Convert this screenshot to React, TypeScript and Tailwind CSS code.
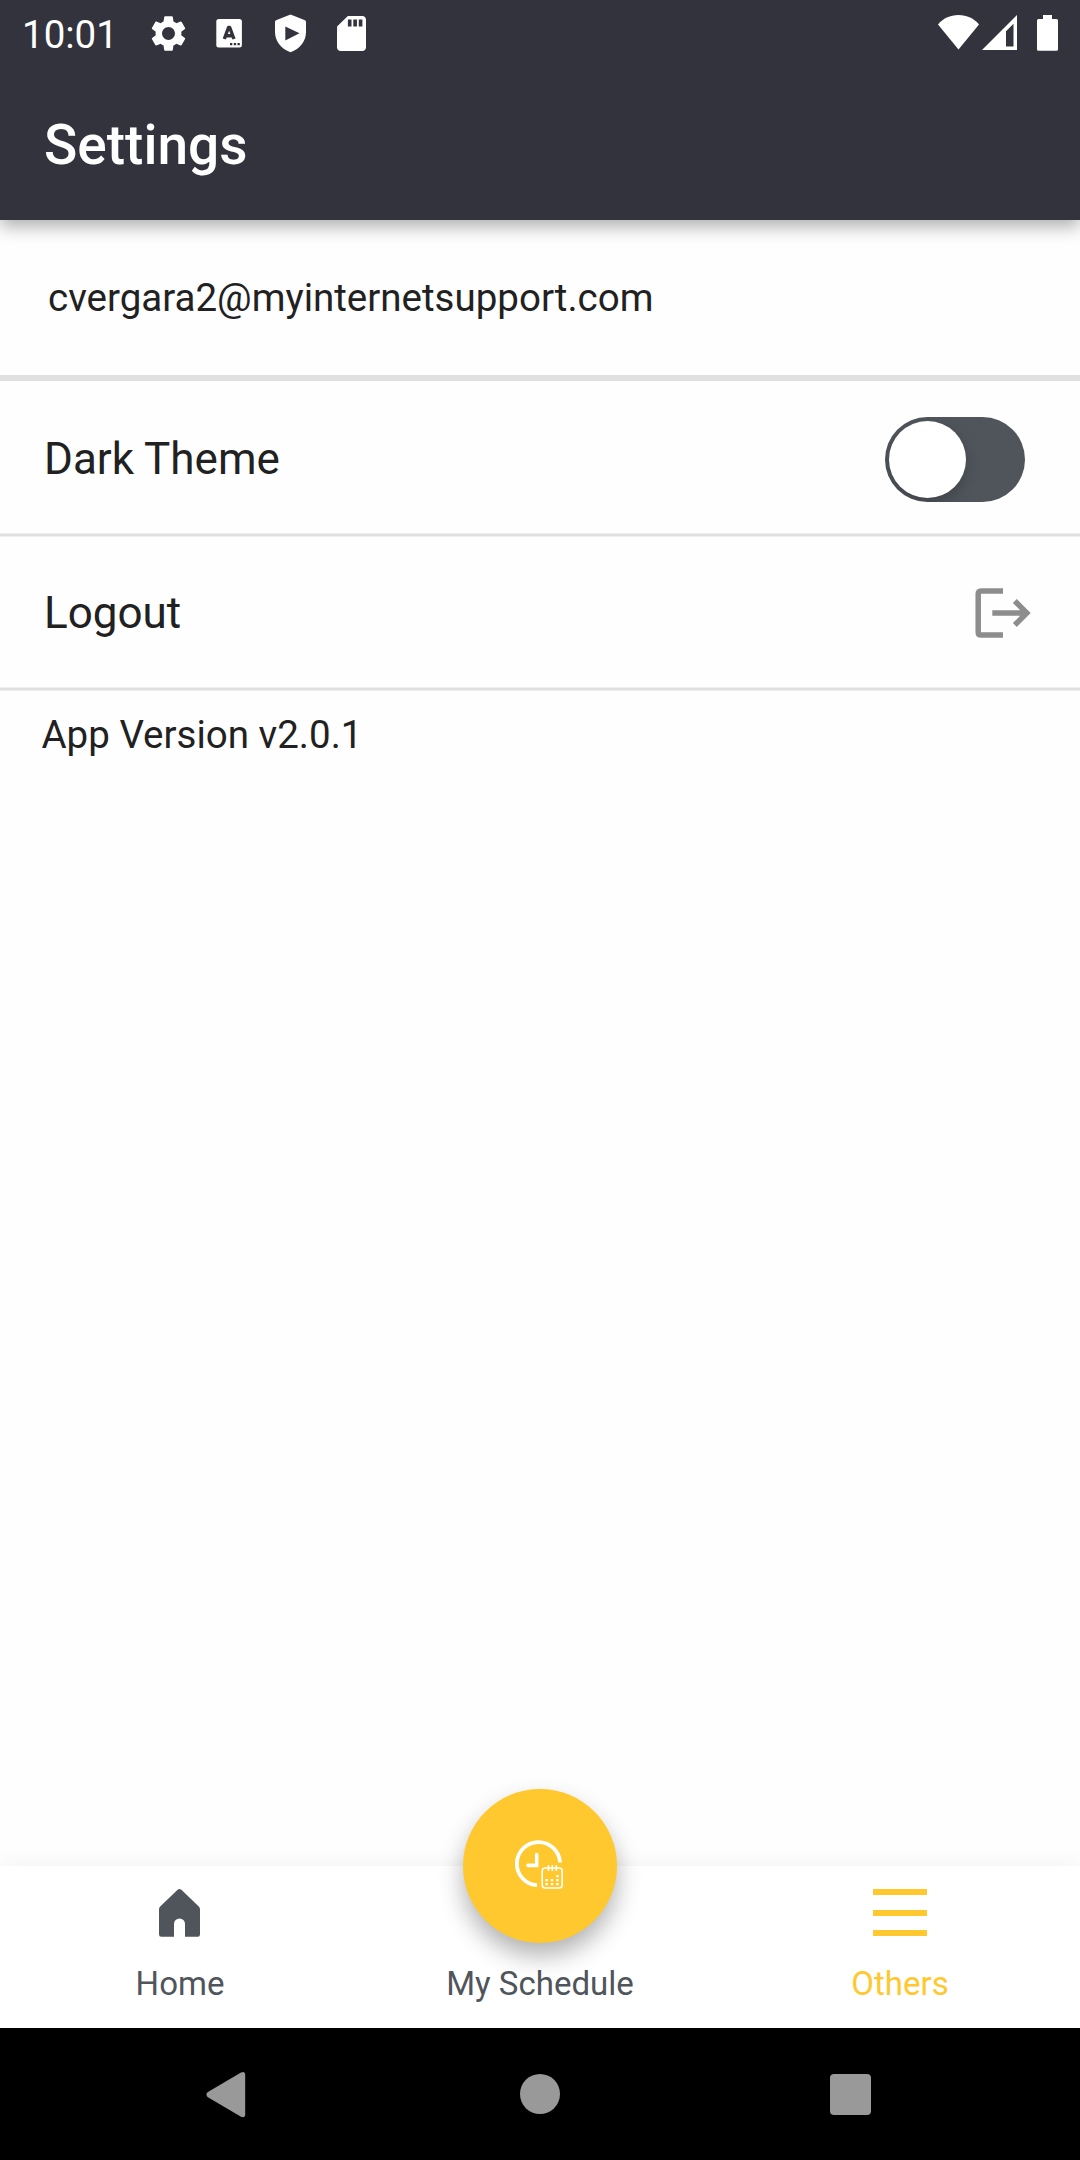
import type { ReactNode } from "react";

function StatusBar() {
  return (
    <div className="flex h-[66px] items-start text-white">
      <span className="ml-[22px] mt-[12px] w-[96px] text-[38.500px] leading-[46px]">10:01</span>
      <svg className="ml-[29px] mt-[12px] h-[43px] w-[43px]" viewBox="0 0 24 24" fill="currentColor">
        <path d="M19.14 12.94c.04-.3.06-.61.06-.94 0-.32-.02-.64-.07-.94l2.03-1.58a.49.49 0 0 0 .12-.61l-1.92-3.32a.488.488 0 0 0-.59-.22l-2.39.96c-.5-.38-1.03-.7-1.62-.94l-.36-2.54a.484.484 0 0 0-.48-.41h-3.84c-.24 0-.43.17-.47.41l-.36 2.54c-.59.24-1.13.57-1.62.94l-2.39-.96c-.22-.08-.47 0-.59.22L2.74 8.87c-.12.21-.08.47.12.61l2.03 1.58c-.05.3-.09.63-.09.94s.02.64.07.94l-2.03 1.58a.49.49 0 0 0-.12.61l1.92 3.32c.12.22.37.29.59.22l2.39-.96c.5.38 1.03.7 1.62.94l.36 2.54c.05.24.24.41.48.41h3.84c.24 0 .44-.17.47-.41l.36-2.54c.59-.24 1.13-.56 1.62-.94l2.39.96c.22.08.47 0 .59-.22l1.92-3.32c.12-.22.07-.47-.12-.61l-2.01-1.58zM12 15.6c-1.98 0-3.6-1.62-3.6-3.6s1.62-3.6 3.6-3.6 3.6 1.62 3.6 3.6-1.62 3.6-3.6 3.6z" />
      </svg>
      <svg className="ml-[26px] mt-[19px] h-[29px] w-[26px]" viewBox="0 0 26 29">
        <rect x="0.3" y="0" width="25.6" height="28.6" rx="2.500" fill="currentColor" />
        <path d="M8.300 20L12.500 8.500H13.700L18 20M9.800 16.800H16.500" fill="none" stroke="#33333d" strokeWidth="3.400" strokeLinejoin="round" />
        <path d="M14 24h2.300v2.200H14zM17.800 24h2.300v2.200h-2.300zM21.500 24h2.300v2.200h-2.300z" fill="#33333d" />
      </svg>
      <svg className="ml-[33px] mt-[14px] h-[39px] w-[32px]" viewBox="0 0 32 39">
        <path d="M15.500.400L30 6.200Q31 6.700 31 7.800V18C31 27 25 35 15.500 38.200C6 35 0 27 0 18V7.800Q0 6.700 1 6.200Z" fill="currentColor" />
        <path d="M10.300 12.500L24.500 19.300L10.300 26.500Z" fill="#33333d" />
      </svg>
      <svg className="ml-[30px] mt-[16px] h-[35px] w-[29px]" viewBox="4 2 16 20" preserveAspectRatio="none" fill="currentColor">
        <path d="M18 2h-8L4.020 8 4 20c0 1.100.900 2 2 2h12c1.100 0 2-.900 2-2V4c0-1.100-.900-2-2-2zm-6 6h-2V4h2v4zm3 0h-2V4h2v4zm3 0h-2V4h2v4z" />
      </svg>
      <svg className="ml-auto mt-[15px] h-[35px] w-[41px]" viewBox="0 0 41 35" fill="currentColor">
        <path d="M20.500 34.500L0 9.500C5 3.500 12 0 20.500 0S36 3.500 41 9.500Z" />
      </svg>
      <svg className="ml-[3px] mt-[15px] h-[35px] w-[35px]" viewBox="0 0 35 35" fill="currentColor">
        <path fillRule="evenodd" d="M0 35L35 0V35ZM24 31.500H31.500V8.700L24 16.200Z" />
      </svg>
      <svg className="ml-[20px] mr-[22px] mt-[15px] h-[36px] w-[21px]" viewBox="0 0 21 36" fill="currentColor">
        <path d="M6 0h9v4h4.500Q21 4 21 5.500v28.700Q21 35.700 19.500 35.700h-18Q0 35.700 0 34.200V5.500Q0 4 1.500 4H6Z" />
      </svg>
    </div>
  );
}

function Divider() {
  return <div className="h-[4px] border-y border-[#efefef] bg-[#e0e0e0]" />;
}

function Row({ label, children }: { label: string; children: ReactNode }) {
  return (
    <div className="flex h-[150px] items-center justify-between pl-[44px] text-[44px] leading-[52px]">
      <span className="mt-[2px]">{label}</span>
      {children}
    </div>
  );
}

function Tab({ label, active, icon }: { label: string; active?: boolean; icon: ReactNode }) {
  return (
    <div className={`flex flex-1 flex-col items-center ${active ? "text-[#ffc82e]" : "text-[#50555c]"}`}>
      <div className="mt-[23px] flex h-[48px] items-start">{icon}</div>
      <span className="mt-[27px] text-[33px] leading-[40px]">{label}</span>
    </div>
  );
}

function ScheduleIcon() {
  return (
    <svg className="mb-[2px] mr-[5px] h-[50px] w-[50px]" viewBox="0 0 50 50" fill="none" stroke="white">
      <path d="M47 22.500A21.600 21.600 0 1 0 24 45.200" strokeWidth="3.800" />
      <path d="M23.700 14.500V25.400H15" strokeWidth="3.600" strokeLinecap="round" />
      <rect x="29.200" y="28" width="20" height="20" rx="3" strokeWidth="1.600" />
      <path d="M35.400 25.300v5.600M39.300 25.300v5.600M43.300 25.300v5.600" strokeWidth="1.600" />
      <path d="M43.200 36.200h2.400M32.500 40.100h2.400M37.800 40.100h2.400M43.200 40.100h2.400M32.500 44.200h2.400M37.800 44.200h2.400M43.200 44.200h2.400" strokeWidth="2.200" />
    </svg>
  );
}

export default function App() {
  return (
    <div className="flex h-[2160px] w-[1080px] flex-col overflow-hidden bg-[#fefefe] font-['Roboto',sans-serif] text-[#212121]">
      <header className="relative h-[220px] shrink-0 bg-[#33333d] shadow-[0_7px_16px_rgba(0,0,0,0.3)]">
        <StatusBar />
        <h1 className="ml-[44px] mt-[46px] text-[55px] font-medium leading-[66px] text-white">Settings</h1>
      </header>

      <main className="flex-1">
        <div className="flex h-[155px] items-center pl-[48px] text-[38.500px] leading-[46px]">
          cvergara2@myinternetsupport.com
        </div>
        <div className="h-[6px] bg-[#e0e0e0]" />
        <div className="pt-[2px]">
          <Row label="Dark Theme">
            <div className="mr-[55px] mt-[3px] flex h-[85px] w-[140px] items-center overflow-hidden rounded-full bg-[#50555c] pl-[4px]">
              <div className="h-[77px] w-[77px] rounded-full bg-white shadow-[0_6px_14px_rgba(0,0,0,0.2)]" />
            </div>
          </Row>
        </div>
        <Divider />
        <Row label="Logout">
          <svg className="mr-[49px] mt-[2px] h-[50px] w-[56px]" viewBox="0 0 56 50" fill="none" stroke="#8d8d8d" strokeWidth="5.500">
            <path d="M28 2.900H6Q3.200 2.900 3.200 5.700V44.300Q3.200 47.100 6 47.100H28" />
            <path d="M17.300 25H51M39.800 13L51.800 25L39.800 37" />
          </svg>
        </Row>
        <Divider />
        <p className="ml-[41.500px] mt-[21px] text-[38.500px] leading-[46px]">App Version v2.0.1</p>
      </main>

      <nav className="relative flex h-[162px] shrink-0 bg-white shadow-[0_0_22px_rgba(0,0,0,0.06)]">
        <Tab
          label="Home"
          icon={
            <svg className="mr-[1px] h-[48px] w-[41px]" viewBox="0 0 41 48" fill="currentColor">
              <path d="M18.600.800Q20.500-.700 22.400.800L39.800 17.500Q41 18.700 41 20.500V45.500Q41 47.700 38.800 47.700H26V35A5.500 5.500 0 0 0 15 35V47.700H2.200Q0 47.700 0 45.500V20.500Q0 18.700 1.200 17.500Z" />
            </svg>
          }
        />
        <Tab label="My Schedule" icon={null} />
        <Tab
          label="Others"
          active
          icon={
            <svg className="h-[48px] w-[54px]" viewBox="0 0 54 48" fill="currentColor">
              <path d="M0 0H54V6H0ZM0 21H54V27H0ZM0 41H54V47H0Z" />
            </svg>
          }
        />
        <button className="absolute left-[463px] top-[-77px] flex h-[154px] w-[154px] items-center justify-center rounded-full bg-[#ffc82e] shadow-[0_13px_24px_rgba(0,0,0,0.3)]">
          <ScheduleIcon />
        </button>
      </nav>

      <footer className="flex h-[132px] shrink-0 items-start bg-black text-[#999999]">
        <svg className="ml-[206px] mt-[44px] h-[46px] w-[40px]" viewBox="0 0 40 46" fill="currentColor">
          <path d="M1.500 20.300Q-.600 22.600 1.500 24.900L35 44.800Q39.200 46.300 39.200 42.500V2.700Q39.200-1.200 35 .600Z" />
        </svg>
        <div className="ml-[274px] mt-[46px] h-[40px] w-[40px] rounded-full bg-[#999999]" />
        <div className="ml-[270px] mt-[46px] h-[41px] w-[41px] rounded-[4px] bg-[#999999]" />
      </footer>
    </div>
  );
}
